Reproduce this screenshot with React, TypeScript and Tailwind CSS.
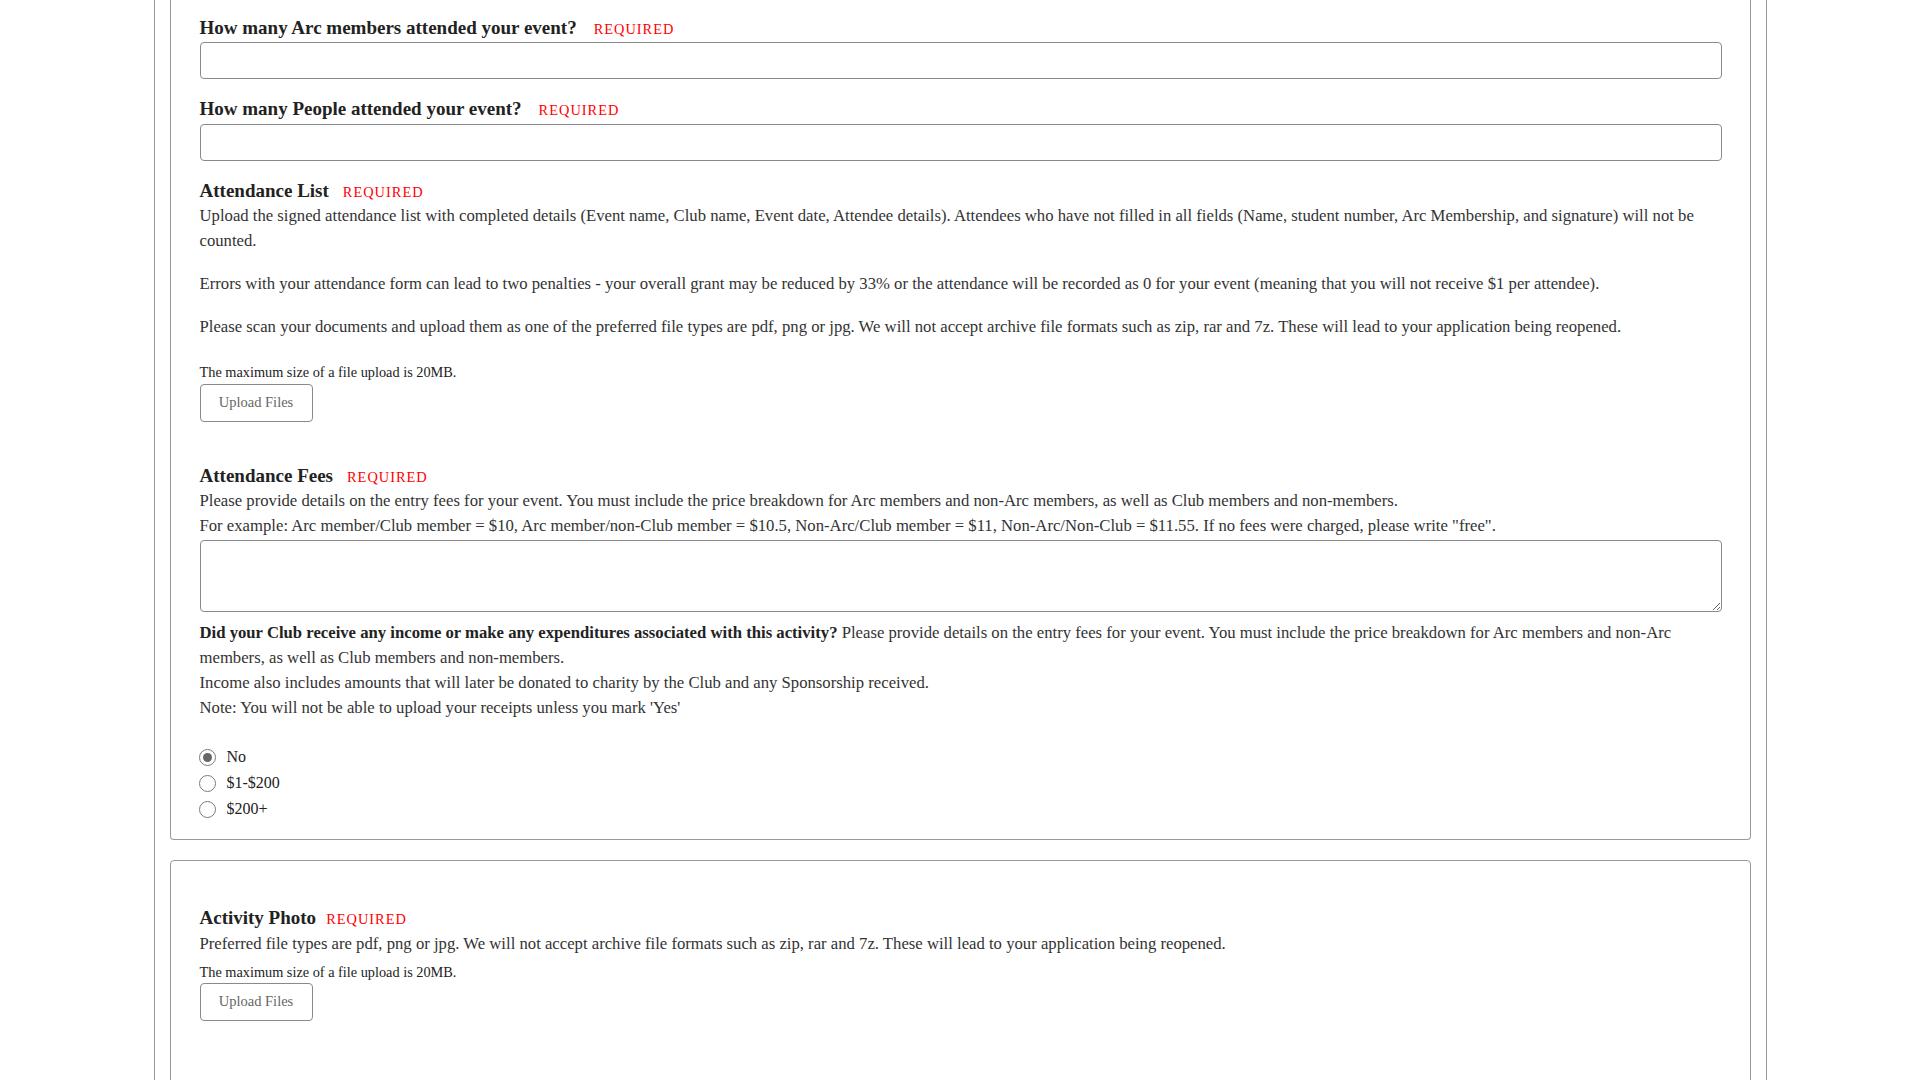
import React from "react";

interface LabelProps {
    title: string;
    gap?: string;
    className?: string;
}

const Label: React.FC<LabelProps> = ({ title, gap = "ml-[17px]", className = "" }) => (
    <div className={`flex items-baseline h-[24px] leading-[26px] ${className}`}>
        <span className="text-[19px] font-bold text-[#222]">{title}</span>
        <span className={`${gap} text-[14.4px] tracking-[1px] text-[#ff0000]`}>REQUIRED</span>
    </div>
);

const UploadButton: React.FC<{ className?: string }> = ({ className = "" }) => (
    <button
        type="button"
        className={`block w-[113px] h-[38px] border border-[#8a8a8a] rounded-[4px] bg-white text-[14.5px] text-[#666] ${className}`}
    >
        Upload Files
    </button>
);

const Radio: React.FC<{ label: string; checked?: boolean }> = ({ label, checked = false }) => (
    <div className="flex items-center h-[26px]">
        <span className="ml-[-1px] w-[17px] h-[17px] rounded-full border border-[#7a7a7a] bg-white flex items-center justify-center">
            {checked && <span className="w-[9px] h-[9px] rounded-full bg-[#666]" />}
        </span>
        <span className="ml-[11px] text-[16px] text-[#222]">{label}</span>
    </div>
);

export default function App() {
    return (
        <div className="w-full h-[1080px] overflow-hidden bg-white font-[family-name:Liberation_Serif,Times_New_Roman,serif] text-[#333]">
            <div className="mx-auto w-[1613px] h-full border-x border-[#999] px-[15px]">
                {/* attendance card, scrolled past its top */}
                <div className="border border-t-0 border-[#999] rounded-b-[4px] pl-[29px] pr-[28px] pt-[15px] pb-[17px]">
                    <Label title="How many Arc members attended your event?" />
                    <input type="text" className="block mt-[3px] w-full h-[37px] border border-[#8a8a8a] rounded-[4px] outline-none" />

                    <Label title="How many People attended your event?" className="mt-[17px]" />
                    <input type="text" className="block mt-[4px] w-full h-[37px] border border-[#8a8a8a] rounded-[4px] outline-none" />

                    <Label title="Attendance List" gap="ml-[14px]" className="mt-[17px]" />
                    <p className="mt-[1px] text-[16.7px] leading-[25px]">
                        Upload the signed attendance list with completed details (Event name, Club name, Event date, Attendee details). Attendees who have not filled in all fields (Name, student number, Arc Membership, and signature) will not be counted.
                    </p>
                    <p className="mt-[18px] text-[16.7px] leading-[25px]">
                        Errors with your attendance form can lead to two penalties - your overall grant may be reduced by 33% or the attendance will be recorded as 0 for your event (meaning that you will not receive $1 per attendee).
                    </p>
                    <p className="mt-[18px] text-[16.7px] leading-[25px]">
                        Please scan your documents and upload them as one of the preferred file types are pdf, png or jpg. We will not accept archive file formats such as zip, rar and 7z. These will lead to your application being reopened.
                    </p>
                    <p className="mt-[23px] text-[14.3px] leading-[20px] text-[#222]">The maximum size of a file upload is 20MB.</p>
                    <UploadButton className="mt-[2px]" />

                    <Label title="Attendance Fees" gap="ml-[14px]" className="mt-[41px]" />
                    <p className="mt-[1px] text-[16.7px] leading-[25px]">
                        Please provide details on the entry fees for your event. You must include the price breakdown for Arc members and non-Arc members, as well as Club members and non-members.
                        <br />
                        For example: Arc member/Club member = $10, Arc member/non-Club member = $10.5, Non-Arc/Club member = $11, Non-Arc/Non-Club = $11.55. If no fees were charged, please write "free".
                    </p>
                    <textarea className="block mt-[2px] w-full h-[72px] border border-[#8a8a8a] rounded-[4px] outline-none" />

                    <p className="mt-[8px] text-[16.7px] leading-[25px]">
                        <span className="font-bold text-[#222]">Did your Club receive any income or make any expenditures associated with this activity?</span>{" "}
                        Please provide details on the entry fees for your event. You must include the price breakdown for Arc members and non-Arc members, as well as Club members and non-members.
                        <br />
                        Income also includes amounts that will later be donated to charity by the Club and any Sponsorship received.
                        <br />
                        Note: You will not be able to upload your receipts unless you mark 'Yes'
                    </p>
                    <div className="mt-[24px]">
                        <Radio label="No" checked />
                        <Radio label="$1-$200" />
                        <Radio label="$200+" />
                    </div>
                </div>

                {/* activity photo card */}
                <div className="mt-[20px] h-[400px] border border-[#999] rounded-[4px] pl-[29px] pr-[28px] pt-[44px]">
                    <Label title="Activity Photo" gap="ml-[10px]" />
                    <p className="mt-[2px] text-[16.7px] leading-[25px]">
                        Preferred file types are pdf, png or jpg. We will not accept archive file formats such as zip, rar and 7z. These will lead to your application being reopened.
                    </p>
                    <p className="mt-[6px] text-[14.3px] leading-[20px] text-[#222]">The maximum size of a file upload is 20MB.</p>
                    <UploadButton className="mt-[1px]" />
                </div>
            </div>
        </div>
    );
}
